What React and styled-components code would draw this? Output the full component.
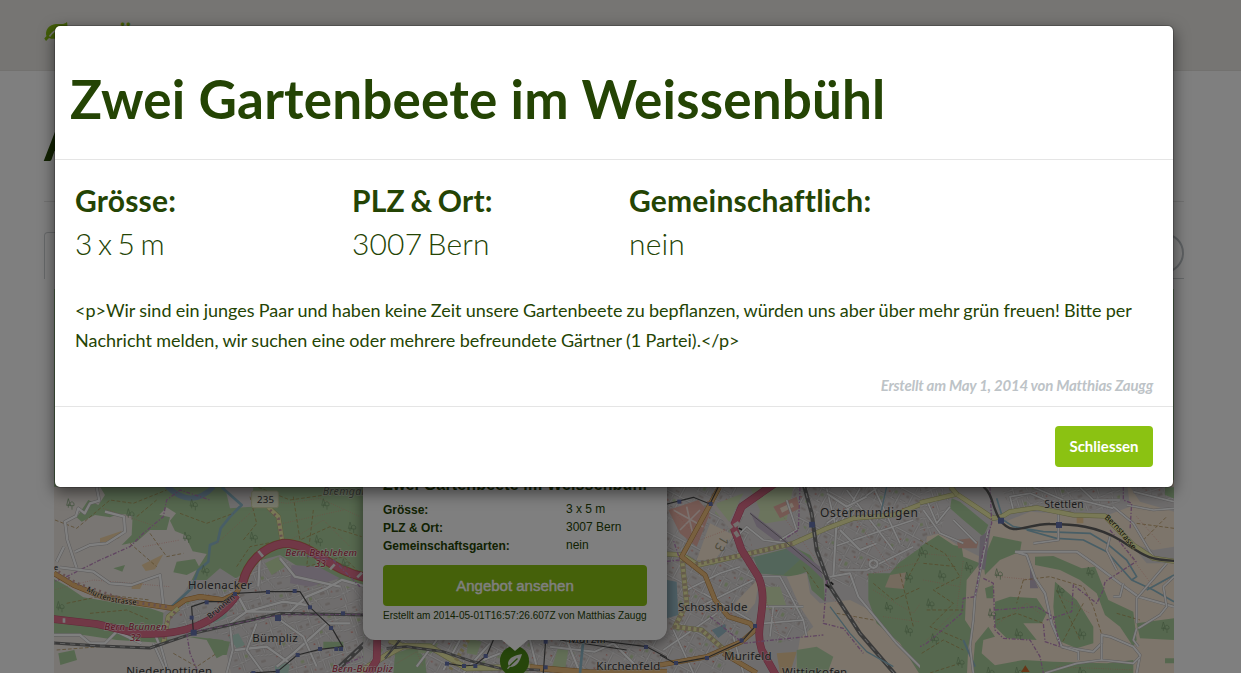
import React from 'react';
import styled, { createGlobalStyle } from 'styled-components';

const GlobalStyle = createGlobalStyle`
  * { box-sizing: border-box; }
  html, body { height: 100%; overflow: hidden; }
  body {
    margin: 0;
    background: #fff;
    color: #244404;
    font-family: Lato, 'Liberation Sans', sans-serif;
  }
`;

const Page = styled.div`
  position: relative;
  width: 1241px;
  height: 673px;
  overflow: hidden;
`;

const Header = styled.header`
  height: 71px;
  padding: 16px 44px;
  background: #ecebe6;
  border-bottom: 1px solid #e4e3de;
`;

const Brand = styled.div`
  display: flex;
  align-items: flex-start;
  color: #86bd10;
  font-size: 26px;
  font-weight: 700;
  line-height: 32px;
  svg { width: 25px; height: 21px; margin-top: 5px; }
  span { margin-left: 46px; margin-top: 5px; }
`;

const Content = styled.main`
  width: 1140px;
  margin-left: 44px;
`;

const PageTitle = styled.h1`
  height: 131px;
  margin: 0;
  padding-top: 38px;
  border-bottom: 1px solid #e4e4e4;
  font-size: 53px;
  font-weight: 700;
  line-height: 64px;
`;

const TabBar = styled.div`
  display: flex;
  align-items: flex-end;
  height: 77px;
`;

const Tab = styled.div`
  width: 150px;
  height: 47px;
  border: 1px solid #cfd3d4;
  border-bottom: 0;
  border-radius: 4px 4px 0 0;
`;

const TabRest = styled.div`
  display: flex;
  flex: 1;
  height: 47px;
  padding-top: 1px;
  justify-content: flex-end;
  border-bottom: 1px solid #cfd3d4;
`;

const RoundButton = styled.div`
  width: 40px;
  height: 40px;
  border: 2px solid #bdc3c7;
  border-radius: 50%;
`;

const MapPane = styled.section`
  width: 1120px;
  height: 384px;
  margin: 10px 10px 0;
  overflow: hidden;
  background: #addaa0;
  svg { display: block; }
`;

const Popup = styled.aside`
  position: absolute;
  left: 363px;
  bottom: 33px;
  width: 304px;
  padding: 20px 20px 16px;
  border-radius: 12px;
  background: #fff;
  box-shadow: 0 3px 14px rgba(0, 0, 0, 0.5);
  font-family: 'Liberation Sans', Arial, sans-serif;
  &::after {
    content: '';
    position: absolute;
    left: 139px;
    top: 100%;
    border: 13px solid transparent;
    border-top: 11px solid #fff;
    border-bottom: 0;
  }
`;

const PopupTitle = styled.h2`
  margin: 0 0 7px;
  font-size: 16px;
  line-height: 17px;
  letter-spacing: 0.15px;
  white-space: nowrap;
`;

const PopupRow = styled.div`
  display: flex;
  height: 18px;
  font-size: 12px;
  line-height: 18px;
  b { width: 183px; padding-top: 1px; }
`;

const PopupButton = styled.div`
  height: 41px;
  margin-top: 11px;
  border-radius: 4px;
  background: #8bc214;
  color: #fff;
  font-size: 15px;
  -webkit-text-stroke: 0.4px #fff;
  line-height: 42px;
  text-align: center;
`;

const PopupNote = styled.div`
  margin-top: 2px;
  font-size: 10.06px;
  line-height: 16px;
  white-space: nowrap;
`;

const Marker = styled.div`
  position: absolute;
  left: 500px;
  top: 646px;
  display: flex;
  align-items: center;
  justify-content: center;
  width: 29px;
  height: 30px;
  border-radius: 15px;
  background: #4d8c16;
  color: #f1f3ee;
`;

const Backdrop = styled.div`
  position: absolute;
  inset: 0;
  background: rgba(0, 0, 0, 0.5);
`;

const Dialog = styled.div`
  position: absolute;
  left: 54px;
  top: 25px;
  width: 1120px;
  height: 463px;
  border: 1px solid rgba(0, 0, 0, 0.2);
  border-radius: 6px;
  background: #fff;
  background-clip: padding-box;
  box-shadow: 0 5px 15px rgba(0, 0, 0, 0.5);
`;

const DialogHeader = styled.div`
  height: 134px;
  padding: 41px 15px 0;
  border-bottom: 1px solid #e5e5e5;
  h1 {
    margin: 0;
    font-size: 53px;
    font-weight: 700;
    line-height: 64px;
    letter-spacing: 0.18px;
    white-space: nowrap;
  }
`;

const DialogBody = styled.div`
  height: 247px;
  padding: 19px 20px;
  border-bottom: 1px solid #e5e5e5;
`;

const Facts = styled.div`
  display: grid;
  grid-template-columns: 277px 277px 1fr;
`;

const Fact = styled.div`
  font-size: 30px;
  font-weight: 300;
  line-height: 43px;
  letter-spacing: 0.15px;
  word-spacing: -2.9px;
  white-space: nowrap;
  b { display: block; font-weight: 700; letter-spacing: 0.2px; word-spacing: -2px; }
`;

const Description = styled.p`
  margin: 30px 0 0;
  font-size: 18px;
  line-height: 30px;
  white-space: nowrap;
`;

const Line = styled.span`
  display: block;
  width: max-content;
  word-spacing: ${(p) => p.$gap};
`;

const Created = styled.div`
  margin-top: 19px;
  color: #bdc3c7;
  font-size: 15px;
  font-style: italic;
  font-weight: 700;
  line-height: 22px;
  text-align: right;
  letter-spacing: -0.22px;
`;

const DialogFooter = styled.div`
  display: flex;
  justify-content: flex-end;
  padding: 19px 20px;
`;

const CloseButton = styled.button`
  width: 98px;
  height: 41px;
  padding: 0;
  border: 0;
  border-radius: 4px;
  background: #8bc212;
  color: #fff;
  font: 700 15px/41px Lato, sans-serif;
`;

const FOREST = '#add19e';
const FARM = '#faead6';
const LAND = '#f2ece6';
const TOWN = '#dfdbda';

const Shape = ({ d, fill }) => <path d={d} fill={fill} />;
const Stroke = ({ d, c, w, dash, o }) => (
  <path d={d} fill="none" stroke={c} strokeWidth={w} strokeDasharray={dash} opacity={o} strokeLinejoin="round" />
);
const Street = ({ d, w = 5 }) => (
  <>
    <Stroke d={d} c="#bbb8b8" w={w + 3} />
    <Stroke d={d} c="#fff" w={w} />
  </>
);
const Road = ({ d, fill, edge, w }) => (
  <>
    <Stroke d={d} c={edge} w={w + 3} />
    <Stroke d={d} c={fill} w={w} />
  </>
);
const Motorway = ({ d, w = 20 }) => <Road d={d} fill="#e2708d" edge="#c25472" w={w} />;
const Primary = ({ d, w = 12 }) => <Road d={d} fill="#f0c07f" edge="#b68445" w={w} />;
const Secondary = ({ d, w = 12 }) => <Road d={d} fill="#f3f2ac" edge="#b5b67a" w={w} />;
const Rail = ({ d, w = 7 }) => (
  <>
    <Stroke d={d} c="#747474" w={w} />
    <Stroke d={d} c="#dedede" w={w / 4} dash="16 14" />
  </>
);
const Tram = ({ d }) => <Stroke d={d} c="#4f4f4f" w="3.5" />;
const Border = ({ d }) => <Stroke d={d} c="#c08bc2" w="4" dash="12 5 4 5" />;
const Track = ({ d }) => <Stroke d={d} c="#ad8a4a" w="2" dash="11 6" />;
const Path = ({ d }) => <Stroke d={d} c="#ee8a80" w="2" dash="2 5" />;
const River = ({ d, w = 5 }) => <Stroke d={d} c="#91bccc" w={w} />;
const Stops = ({ at, s = 12 }) =>
  at.map(([x, y]) => <rect key={`${x}-${y}`} x={x - s / 2} y={y - s / 2} width={s} height={s} fill="#6774b1" />);
const Label = ({ x, y, size = 34.5, children, fill = '#3b3b3b', halo = '#efebe7', ...rest }) => (
  <text x={x} y={y} fontSize={size} fill={fill} stroke={halo} strokeWidth="4" paintOrder="stroke"
    strokeOpacity="0.6" fontFamily="'Noto Sans', sans-serif" letterSpacing="0.8" {...rest}>{children}</text>
);
const Exit = (p) => <Label fill="#b3243f" halo="#fff" fontStyle="italic" size={29} {...p} />;

const Trees = ({ at }) =>
  at.map(([x, y]) => (
    <path key={`${x}-${y}`} d={`M${x} ${y + 13}v-12m-5 5l5-20l6 20zm16 13v-12m-6 0c-4-15 15-15 12 0z`}
      fill="none" stroke="#7fa375" strokeWidth="2" />
  ));

const WestMap = () => (
  <g transform="translate(50 480) scale(.33333)">
    <Shape fill={FOREST} d="M0 0H960V600H0z" />
    <Shape fill={LAND} d="M0 20H150L165 45L145 75L115 60L80 112L95 125L135 105L180 112L205 102L248 105L245 165L215 195L260 185L300 150L350 150L360 112L328 104L350 82L378 100L360 122L375 153L405 165L428 214L470 222L440 270L410 330L360 405L300 385L235 375L100 352L50 318L0 290z" />
    <Shape fill={LAND} d="M0 470L100 465L200 480L330 488L410 470L470 480L500 535L548 510L560 600H0z" />
    <Shape fill={FOREST} d="M35 350L110 355L230 374L310 395L300 430L120 410L35 390z" />
    <Shape fill={FOREST} d="M25 520l48-10l8 30l-50 15z" />
    <Shape fill={FOREST} d="M380 245l55-8l15 28l-40 20l-40-8zM190 265l35-10l-8 20z" />
    <Shape fill={TOWN} d="M340 400L400 340L425 300L470 300L510 265L565 300L635 240L690 225L760 270L870 300L940 320V600H548L520 480L430 470L335 480z" />
    <Shape fill={TOWN} d="M525 22H610L605 80L540 85z" />
    <Shape fill="url(#streetsA)" d="M410 355L520 315L635 250L690 230L760 280L850 310L940 330V600H560L520 465L440 450L400 470L370 400z" />
    <Shape fill="#f4d7a8" d="M150 175l65-22l-7 22l-58 18zM275 255l65-32l-25 45l-28 5zM245 315l35-8l-10 20h-25z" />
    <Shape fill="#d0c2d4" d="M725 255l80 5l65 35l-90 25l-60-10z" />
    <Shape fill="#bbded0" d="M480 400l50-3v15l-40 18zM535 470l30-10l20 35l-25 10zM675 558l45-12l-5 33h-40z" />
    <Shape fill="#c9e2ae" d="M645 250l40-20l20 30l-40 25z" />
    <Shape fill={FOREST} d="M820 485l60 0v20h-60zM475 475l65 10l-10 40l-20 0z" />
    <Stroke d="M350 18Q425 90 490 20" c="#95b6cf" w="16" />
    <Shape fill={FOREST} d="M370 22Q425 62 480 22z" />
    <River w={8} d="M515 22L575 75L540 110L512 145L503 185L480 195L475 245L445 270L425 325L360 385" />
    <Track d="M15 120L80 145L180 60L250 70L350 30M260 110L320 60M390 100L470 130L550 100M240 190L320 260M300 160L350 230L400 220M625 22L720 60L930 30M730 50L750 180L840 140L935 170M790 90L770 260L880 230L930 280M580 180L620 130L600 50" />
    <Track d="M50 370L170 345L300 360M120 400L230 390L300 420M20 510L150 500M370 520L440 560L500 520M560 260L600 200L700 180" />
    <Path d="M500 190L600 100L640 60L710 70L810 55L930 110M690 200L820 120L900 200M160 85L320 140M280 200L390 180M700 130L880 90M10 330L130 300L360 320" />
    <Border d="M0 310L50 290L150 240L240 200L280 160L340 110L350 60L390 30L480 60" />
    <Street d="M140 22L148 62L120 70L104 100L85 85L78 108L45 125L52 180L80 265M75 216L120 195L170 190L225 155L222 110L165 95M42 200L20 245" w={7} />
    <Street d="M30 262L130 275L180 310L245 315L330 285L340 375M330 500L318 470L335 440M12 465L90 465L120 490L165 490L200 455L275 490" w={7} />
    <Street d="M560 340L590 395L720 395L770 350L830 325L875 300L940 318M630 225L625 320M590 395L540 430M590 395L700 365L770 375M690 235L735 290L870 320M680 560L730 520L830 430L900 430M555 510L650 500L720 550" w={7} />
    <Street d="M330 490L355 579M310 490L350 579M540 435L548 510L530 579M620 430L590 510L640 579M690 420L760 470L800 560" w={6} />
    <Road d="M12 280L70 315L160 352L270 370L370 385L405 360L450 350L520 360L560 340L580 290" fill="#f0bd78" edge="#bb8040" w={13} />
    <Secondary d="M655 82L685 110L697 185M385 385L355 410L340 490" />
    <Stroke d="M660 90L685 115L695 180M375 395L350 430L340 485M25 275L80 310L240 365L360 382" c="#cba0a0" w="9" dash="6 11" />
    <Stroke d="M578 310C590 250 640 200 700 190C790 188 830 270 950 293" c="#c89045" w="28" />
    <Motorway w={22} d="M578 310C590 250 640 200 700 190C790 188 830 270 950 293" />
    <Motorway w={20} d="M0 416L140 432L260 460Q360 468 440 438Q520 405 560 345" />
    <Stroke d="M625 213l14 17M840 268l14-15M922 292l14-14M42 415v13" c="#eee" w="8" />
    <Rail w={9} d="M0 488L150 498L300 504L430 460L690 400L940 405" />
    <Stroke d="M430 455L690 405L940 403" c="#b078b8" w="3" dash="10 6" />
    <Rail w={15} d="M870 560L945 490" />
    <Tram d="M430 455L425 380L470 365L520 365L555 340L655 335L750 335L780 382L845 443L878 500L810 508L742 525L683 574L600 579" />
    <Border d="M410 460L420 520L445 579M870 600L890 550L940 530M720 220L850 240L930 320" />
    <Stops at={[[470, 367], [555, 342], [654, 336], [734, 333], [780, 382], [843, 444], [425, 413], [743, 525], [683, 574], [610, 579], [859, 507], [873, 507], [810, 507], [879, 400]]} />
    <Stops s={18} at={[[431, 458], [684, 414]]} />
    <Trees at={[[55, 70], [425, 72], [235, 100], [405, 170], [460, 270], [25, 378], [605, 170], [800, 180], [900, 140], [820, 70], [880, 250]]} />
    <rect x="605" y="33" width="80" height="50" rx="6" fill="#eff3d7" stroke="#d7d9ac" strokeWidth="3" />
    <Label x={621} y={69} size={29}>235</Label>
    <Label x={818} y={44} size={32} fontStyle="italic" fill="#6c7765">Bremgarten</Label>
    <Label x={414} y={328}>Holenacker</Label>
    <Label x={607} y={486}>Bümpliz</Label>
    <Label x={229} y={584}>Niederbottigen</Label>
    <Exit x={706} y={227}>Bern Bethlehem</Exit>
    <Exit x={795} y={262}>33</Exit>
    <Exit x={163} y={449}>Bern Brünnen</Exit>
    <Exit x={240} y={484}>32</Exit>
    <path id="murten" d="M108 332Q170 375 280 374" fill="none" />
    <Label size={22} fill="#20180b"><textPath href="#murten">Murtenstrasse</textPath></Label>
    <Label x={480} y={418} size={23} fill="#222" transform="rotate(-40 480 418)">Brünnen</Label>
    <Label x={12} y={270} size={22} fill="#222">e</Label>
  </g>
);

const CentreMap = () => (
  <g transform="translate(350 480) scale(.33333)">
    <Shape fill={TOWN} d="M40 0H995V600H40z" />
    <Shape fill="url(#streetsB)" d="M40 460H995V600H40zM945 0H1000V500H945z" />
    <Shape fill={FOREST} d="M135 520l60-20l30 35l5 50H130z" />
    <Shape fill="#c6dfae" d="M205 490l60 0l-20 30h-40zM355 475l40 10l-15 40l-30-5zM625 500l30 10l-10 60l-40-5z" />
    <Path d="M140 550L200 515L220 560M640 490L700 560M340 550L420 530" />
    <Street d="M200 560L260 480M280 570L330 480M340 579L420 490M540 480L560 560L620 579M600 500L735 515L790 490L880 579M650 480L690 579M400 540L450 520" w={6} />
    <Secondary w={15} d="M30 575L110 525L160 498L240 500L350 565L550 560M118 480L160 500" />
    <Stroke d="M355 480L300 570" c="#d5c98d" w="12" dash="8 8" />
    <Motorway d="M82 470L80 540L50 590" />
    <Primary w={16} d="M540 562L720 578L1000 576" />
    <Rail w={8} d="M110 505L170 500L280 515L370 545L450 565L570 570" />
    <Rail w={6} d="M105 535L150 480" />
    <Tram d="M430 480L410 527L375 555L340 558L290 550M587 480L580 579M730 480L890 500L980 548M630 480L830 510" />
    <River w={8} d="M700 480L690 579" />
    <Stops at={[[407, 528], [376, 558], [342, 558], [291, 551], [587, 485], [587, 562], [888, 501], [978, 549]]} />
    <Label x={655} y={489}>Marzili</Label>
    <Label x={739} y={571}>Kirchenfeld</Label>
    <Exit x={-54} y={577}>Bern-Bümpliz</Exit>
  </g>
);

const EastMap = () => (
  <g transform="translate(660 480) scale(.33333)">
    <Shape fill={TOWN} d="M21 0H820V600H21z" />
    <Shape fill="url(#streetsB)" d="M21 20H230L300 290L180 600H21zM350 20H820V210L650 280L600 330L510 300L470 200zM300 290L410 340L460 470L350 490z" />
    <Shape fill={FOREST} d="M280 232L400 200L450 225L490 290L495 365L455 330L440 275L400 290L300 280z" />
    <Shape fill="#a7cdb6" d="M280 232L400 203L425 235L370 285L300 280z" />
    <Shape fill={FARM} d="M380 290L440 280L450 340L480 370L570 360L640 395L720 480L790 560V600H400L420 475L460 440L420 380z" />
    <Shape fill={FARM} d="M225 370L300 290L285 370L260 400zM110 240L150 130L220 165L165 240z" />
    <Shape fill="#d7e8bb" d="M170 70l80-30l-45 90l-40-30zM270 22H400L380 120L290 135L300 90zM310 320l50 0l20 60l-70 10z" />
    <Shape fill="#eab3a7" d="M25 90L115 60L150 100L110 200L60 160zM340 80L410 50L420 85L360 115z" />
    <Shape fill={FARM} d="M360 84L396 68L402 80L366 98z" />
    <Stroke d="M40 90L130 140M60 150L120 90M80 80L100 170" c="#f6e3dc" w="5" />
    <Shape fill="#c6b9cd" d="M270 95L480 260L490 300L450 260L290 140z" />
    <Shape fill={FOREST} d="M625 280L690 280L715 250L800 190H830V600H790L720 490L650 430L625 360z" />
    <Shape fill="#ead6bd" d="M690 285l50-8l-10 50l-55-5z" />
    <Shape fill="#9cbeca" d="M155 450l40-18l5 22l-25 20zM21 300l29 5l5 100l-34 10z" />
    <Shape fill="#efcf9e" d="M350 520l60-5l-20 64h-30z" />
    <Shape fill="#b9d9ab" d="M410 510l60-10l50 30l-20 55h-90z" />
    <Street d="M220 180L260 140L310 180L380 190M380 60L410 150L360 180M500 25L530 150L600 25M500 130L650 25M520 200L760 120M560 30L700 210M640 20L720 190M540 270L620 270L760 200M80 330L180 280L240 260M100 390L280 300M130 340L270 420M10 510L170 400M40 450L100 579M220 470L250 579M300 290L360 290L430 420L440 470M300 380L430 380M310 430L430 420M340 380L330 470" />
    <Street d="M510 290L570 280L595 350L710 490L790 570M530 120L520 290M540 150L600 210L650 190M500 40L560 80L620 50M640 240a12 12 0 1 0 1 0" w={6} />
    <Path d="M30 80L120 180L200 150M370 110L470 240M310 340L360 470M580 110L690 260M640 330L760 400L810 330M640 280L810 240M670 410L810 430M60 280L190 430M510 350L600 430" />
    <Track d="M640 310L700 360L810 310M720 280L760 440M800 190L740 300M530 400L640 420M430 260L480 330" />
    <Stroke d="M21 222L65 225L115 255L280 218L400 190L500 145L580 115L700 105L810 62M65 225L80 370L45 440L125 450L210 525" c="#b5b67a" w="15" />
    <Stroke d="M21 222L65 225L115 255L280 218L400 190L500 145L580 115L700 105L810 62M65 225L80 370L45 440L125 450L210 525" c="#f2f0ac" w="12" />
    <Stroke d="M90 255L280 218L400 190M65 225L80 370L45 440L125 450L210 525" c="#c9b597" w="12" dash="8 9" />
    <Primary d="M178 22L65 230L135 285L165 360L205 410L270 430L285 450L245 485L140 530L0 555M190 520L290 579" />
    <Motorway d="M345 10L245 80L220 140L245 210L295 290C330 370 280 440 305 510L350 590" />
    <Stroke d="M160 75L215 145M222 138l15-10M225 155l10 15" c="#e6dedb" w="12" />
    <Rail w={12} d="M430 10L455 100L470 210L510 320L600 460L720 600" />
    <Stroke d="M270 100L370 180L500 290" c="#888089" w="3" />
    <River w={4} d="M680 20L660 110M510 380L570 460L620 515L700 560" />
    <Border d="M420 22L415 150L370 180M500 300L490 430L550 445L610 520M150 410L250 490L340 480L490 465M21 244L60 240L40 180" />
    <Tram d="M21 72L100 52L150 72L175 20M285 440L245 485L140 533L45 550L0 525" />
    <Stops at={[[58, 65], [152, 72], [285, 438], [245, 481], [141, 534], [48, 549]]} />
    <Stops s={17} at={[[456, 134]]} />
    <Stroke d="M496 313l12 10M512 306l8 8M236 145l10 4" c="#303030" w="5" />
    <Trees at={[[780, 220], [740, 290], [680, 380], [800, 370], [740, 450]]} />
    <Label x={480} y={111} size={36} letterSpacing="2.2">Ostermundigen</Label>
    <Label x={54} y={392}>Schosshalde</Label>
    <Label x={192} y={540}>Murifeld</Label>
    <Label x={366} y={588}>Wittigkofen</Label>
    <Label x={176} y={150} size={40} fill="#a49a78" transform="rotate(120 176 160)">13</Label>
  </g>
);

const FarEastMap = () => (
  <g transform="translate(920 480) scale(.33333)">
    <Shape fill={FARM} d="M20 0H770V600H20z" />
    <Shape fill={TOWN} d="M0 0H620L630 80L550 110L330 95L245 130L215 120L200 240L120 200L60 160L0 175zM630 20H762V95L660 65zM630 190L700 210L762 200V250L680 250z" />
    <Shape fill="url(#streetsA)" d="M0 20H100L60 160L0 175zM240 20H600V85L400 100L270 80zM640 20H762V80z" />
    <Shape fill={FOREST} d="M0 200L55 165L100 195L125 200L130 230L180 250L140 300L135 420L155 450L145 500L140 600H0z" />
    <Shape fill={FOREST} d="M95 55L120 65L205 135L190 170L130 120L90 85zM220 168L305 185L300 215L240 240L195 285L190 240z" />
    <Shape fill={FOREST} d="M345 230L400 228L485 265L525 260L565 360L640 395L650 480L640 500L600 440L555 405L530 340L480 300L420 270L345 255z" />
    <Shape fill={FOREST} d="M225 365L270 350L350 355L380 400L365 430L310 430L350 480L260 475L225 440zM405 305L470 360L520 440V490L470 505L410 480L400 380z" />
    <Shape fill={FOREST} d="M195 325l25-10v40h-20zM650 430L762 415V480L660 475zM200 560L310 540L400 545L560 550L640 540V600H170zM205 440L225 470L190 480L185 520L230 560L200 600H155L165 490zM735 22h30v35l-30-12zM735 535h30v15h-30z" />
    <Shape fill="#c3b7c8" d="M330 245l10 45l15 35h-25zM180 170l30-20l-15 120l-20-5z" />
    <Shape fill="#e7b8a8" d="M110 180l40-5l25 10l-5 20l-55 0z" />
    <Shape fill="#f8d59f" d="M470 110l20-5v25h-20z" />
    <Track d="M0 180L75 220L120 290L40 330L100 370L30 440L125 480M10 250L110 260M20 390L130 390M5 520L70 480L130 510M30 579L120 550M230 420L290 400L370 430M410 330L480 480M490 370L420 500M310 300L390 290L490 320L520 380L550 480M310 300L290 370M650 130L762 145M670 180L740 110M590 300L620 330M590 400L660 420" />
    <Path d="M0 220L110 230M10 300L120 320M20 480L110 390L130 240M220 440L320 370L360 400M240 290L340 300M420 350L510 400M610 200L700 320L762 290M650 110L720 190M410 560L640 570" />
    <River d="M230 55L250 120L280 140L370 155L510 160L560 190L620 240L650 290L635 300L560 215L490 180L410 175L320 150M762 285L680 330M635 300L700 330L762 365" />
    <River d="M130 480L165 560" w={6} />
    <Street d="M285 215L320 225L345 295L375 340L395 430L425 500L520 515L545 490L545 465L570 470L640 500L660 525L650 579M285 215L470 215L520 250L600 310L655 350L762 380" w={6} />
    <Street d="M415 95V180L340 190M570 170L560 210L590 270M740 250L650 355V430M655 445L720 405L740 380L730 320L762 290M650 445L640 480L655 500M545 490V540L640 550L660 530M545 540L470 550L375 579M425 500L475 515V540M610 310L600 350L580 350M165 350L160 420L150 500L160 579M165 350L205 150M10 90L60 160L130 190" w={5} />
    <Street d="M280 90L270 50L330 40L400 70L480 60L580 85M340 22L430 60M480 22L520 60L600 60M620 75L700 90L762 85M640 35L762 65M20 60L50 130L90 80M580 80L640 130L690 215L710 240M100 120L170 190" w={5} />
    <Secondary d="M0 68L110 42L220 115L245 110L270 95L350 83L460 105L555 108L590 145L640 195L700 235L770 245" />
    <Secondary d="M92 20L112 45" />
    <Border d="M210 20L215 130L190 210L165 350L130 355L125 400L20 490L0 500M610 20L610 60L635 70L630 150M570 150L648 245L555 305L550 330L530 370L460 315L455 395L380 420M190 295L220 310L225 450L250 475L330 480L360 530L370 579M225 390L350 380L400 410L420 500L375 485L370 430" />
    <Stroke d="M190 20C220 45 215 80 240 120C280 175 320 130 390 132C460 132 530 138 600 180C670 225 680 240 770 243" c="#626262" w="7" />
    <Stops s={18} at={[[243, 122], [417, 135]]} />
    <Trees at={[[5, 215], [60, 285], [140, 260], [230, 280], [25, 370], [210, 400], [38, 475], [290, 460], [480, 460], [115, 545], [730, 440], [205, 575], [290, 575], [480, 575], [415, 330], [505, 275]]} />
    <path d="M303 576l13-20l13 20z" fill="#ce6f30" />
    <Label x={373} y={84} size={31}>Stettlen</Label>
    <path id="bern" d="M553 115Q590 145 642 215" fill="none" />
    <Label size={23} fill="#20200f" halo="#f4f2ac" letterSpacing="0"><textPath href="#bern">Bernstrasse</textPath></Label>
  </g>
);

const StreetMap = () => (
  <svg width="1120" height="384" viewBox="54 289 1120 384">
    <defs>
      <pattern id="streetsA" width="118" height="104" patternUnits="userSpaceOnUse" patternTransform="rotate(-18)">
        <path d="M0 12L60 4L118 12M0 42Q50 30 118 42M0 80L70 68L118 80M18 0L26 104M64 4L52 60L70 104M94 8L100 70M36 44L38 80" fill="none" stroke="#b9b5b4" strokeWidth="6" />
        <path d="M0 12L60 4L118 12M0 42Q50 30 118 42M0 80L70 68L118 80M18 0L26 104M64 4L52 60L70 104M94 8L100 70M36 44L38 80" fill="none" stroke="#f3f1f1" strokeWidth="3.5" />
        <path d="M6 24h9v7H6zM36 18h12v6H36zM74 52h15v8H74zM4 60h10v6H4zM80 88h14v6H80zM104 24h8v9h-8z" fill="#c9bfbb" />
        <path d="M38 56h9v9h-9zM75 20h10v9H75z" fill="#c5d7a9" />
        <path d="M10 90h5M82 42h4M44 30h4M108 60h4" stroke="#df8a80" strokeWidth="4" />
      </pattern>
      <pattern id="streetsB" width="96" height="112" patternUnits="userSpaceOnUse" patternTransform="rotate(28)">
        <path d="M0 16L96 16M0 50Q46 68 96 50M0 88L96 88M22 0L18 55L22 112M54 16L62 60M76 0L80 50L76 112M44 60L48 88" fill="none" stroke="#b6b2b1" strokeWidth="6" />
        <path d="M0 16L96 16M0 50Q46 68 96 50M0 88L96 88M22 0L18 55L22 112M54 16L62 60M76 0L80 50L76 112M44 60L48 88" fill="none" stroke="#f3f1f1" strokeWidth="3.5" />
        <path d="M4 28h9v8H4zM32 26h12v7H32zM60 72h10v9H60zM28 96h16v6H28zM86 66h7v12h-7zM56 2h13v6H56z" fill="#c8bdb9" />
        <path d="M30 66h9v12h-9zM62 30h9v9h-9z" fill="#c3d8aa" />
        <path d="M10 70h5M86 30h5M46 42h4M60 102h4" stroke="#e08478" strokeWidth="4" />
      </pattern>
    </defs>
    <WestMap />
    <CentreMap />
    <EastMap />
    <FarEastMap />
  </svg>
);

const BrandLeaf = () => (
  <svg viewBox="0 0 25 21">
    <path d="M23 1C20 4 17 2.5 12 3C5 4 2 8 2 13Q2 14 2.500 15L.3 17.500L2 20L5 17C13 20 26 15 23 1Z" fill="currentColor" />
    <path d="M5.500 15.500Q9 10 15 8" fill="none" stroke="#ecebe6" strokeWidth="1.800" />
  </svg>
);

const MarkerLeaf = () => (
  <svg width="17" height="17" viewBox="0 0 17 17">
    <path d="M16 1C10 2 3 4 2 10Q2 12 3 13L1 15.5L2 16L4 14C11 14 14 8 16 1Z" fill="currentColor" />
    <path d="M3.5 13L11.5 5.5" stroke="#4d8c16" strokeWidth="1.2" />
  </svg>
);

export default function App() {
  return (
    <Page>
      <GlobalStyle />
      <Header>
        <Brand><BrandLeaf /><span>Ö</span></Brand>
      </Header>
      <Content>
        <PageTitle>A</PageTitle>
        <TabBar>
          <Tab />
          <TabRest><RoundButton /></TabRest>
        </TabBar>
        <MapPane><StreetMap /></MapPane>
      </Content>
      <Marker><MarkerLeaf /></Marker>
      <Popup>
        <PopupTitle>Zwei Gartenbeete im Weissenbühl</PopupTitle>
        <PopupRow><b>Grösse:</b>3 x 5 m</PopupRow>
        <PopupRow><b>PLZ &amp; Ort:</b>3007 Bern</PopupRow>
        <PopupRow><b>Gemeinschaftsgarten:</b>nein</PopupRow>
        <PopupButton>Angebot ansehen</PopupButton>
        <PopupNote>Erstellt am 2014-05-01T16:57:26.607Z von Matthias Zaugg</PopupNote>
      </Popup>
      <Backdrop />
      <Dialog>
        <DialogHeader><h1>Zwei Gartenbeete im Weissenbühl</h1></DialogHeader>
        <DialogBody>
          <Facts>
            <Fact><b>Grösse:</b>3 x 5 m</Fact>
            <Fact><b>PLZ &amp; Ort:</b>3007 Bern</Fact>
            <Fact><b>Gemeinschaftlich:</b>nein</Fact>
          </Facts>
          <Description>
            <Line $gap="-0.43px">{'<p>Wir sind ein junges Paar und haben keine Zeit unsere Gartenbeete zu bepflanzen, würden uns aber über mehr grün freuen! Bitte per'}</Line>
            <Line $gap="-0.3px">{'Nachricht melden, wir suchen eine oder mehrere befreundete Gärtner (1 Partei).</p>'}</Line>
          </Description>
          <Created>Erstellt am May 1, 2014 von Matthias Zaugg</Created>
        </DialogBody>
        <DialogFooter><CloseButton>Schliessen</CloseButton></DialogFooter>
      </Dialog>
    </Page>
  );
}
